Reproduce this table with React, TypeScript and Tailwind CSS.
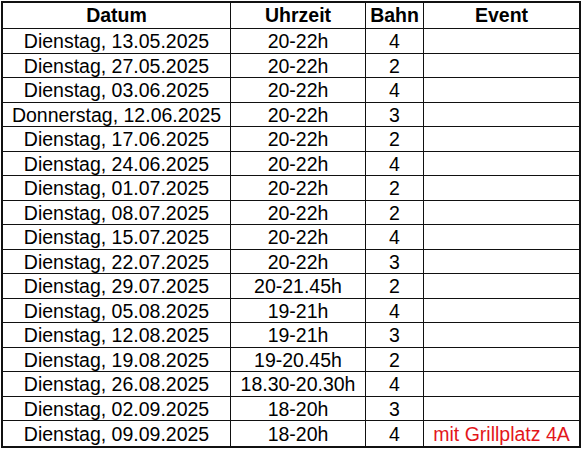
const rows: [string, string, string, string][] = [
  ['Dienstag, 13.05.2025', '20-22h', '4', ''],
  ['Dienstag, 27.05.2025', '20-22h', '2', ''],
  ['Dienstag, 03.06.2025', '20-22h', '4', ''],
  ['Donnerstag, 12.06.2025', '20-22h', '3', ''],
  ['Dienstag, 17.06.2025', '20-22h', '2', ''],
  ['Dienstag, 24.06.2025', '20-22h', '4', ''],
  ['Dienstag, 01.07.2025', '20-22h', '2', ''],
  ['Dienstag, 08.07.2025', '20-22h', '2', ''],
  ['Dienstag, 15.07.2025', '20-22h', '4', ''],
  ['Dienstag, 22.07.2025', '20-22h', '3', ''],
  ['Dienstag, 29.07.2025', '20-21.45h', '2', ''],
  ['Dienstag, 05.08.2025', '19-21h', '4', ''],
  ['Dienstag, 12.08.2025', '19-21h', '3', ''],
  ['Dienstag, 19.08.2025', '19-20.45h', '2', ''],
  ['Dienstag, 26.08.2025', '18.30-20.30h', '4', ''],
  ['Dienstag, 02.09.2025', '18-20h', '3', ''],
  ['Dienstag, 09.09.2025', '18-20h', '4', 'mit Grillplatz 4A'],
];

const cell = 'flex items-center justify-center border-r border-[#111] pt-[2px] whitespace-nowrap';
const headCell = 'flex items-center justify-center border-r border-[#111] whitespace-nowrap';

export default function App() {
  return (
    <div className="min-h-[450px] bg-white pt-[1px] pl-[1px] font-['Liberation_Sans',Arial,sans-serif] text-[19.5px] leading-none text-black">
      <div className="w-[580px] border-2 border-[#111]">
        {/* Kopfzeile */}
        <div className="grid h-[26px] grid-cols-[228px_135px_58px_1fr] border-b border-[#111] font-bold">
          <div className={headCell}>Datum</div>
          <div className={headCell}>Uhrzeit</div>
          <div className={headCell}>Bahn</div>
          <div className="flex items-center justify-center">Event</div>
        </div>
        {rows.map(([datum, zeit, bahn, event], i) => (
          <div
            key={datum}
            className={
              i < rows.length - 1
                ? 'grid h-[24.5px] grid-cols-[228px_135px_58px_1fr] border-b border-[#111]'
                : 'grid h-[24.5px] grid-cols-[228px_135px_58px_1fr]'
            }
          >
            <div className={cell}>{datum}</div>
            <div className={cell}>{zeit}</div>
            <div className={cell}>{bahn}</div>
            <div className="flex items-center justify-center pt-[2px] whitespace-nowrap text-[#e3161b]">{event}</div>
          </div>
        ))}
      </div>
    </div>
  );
}
